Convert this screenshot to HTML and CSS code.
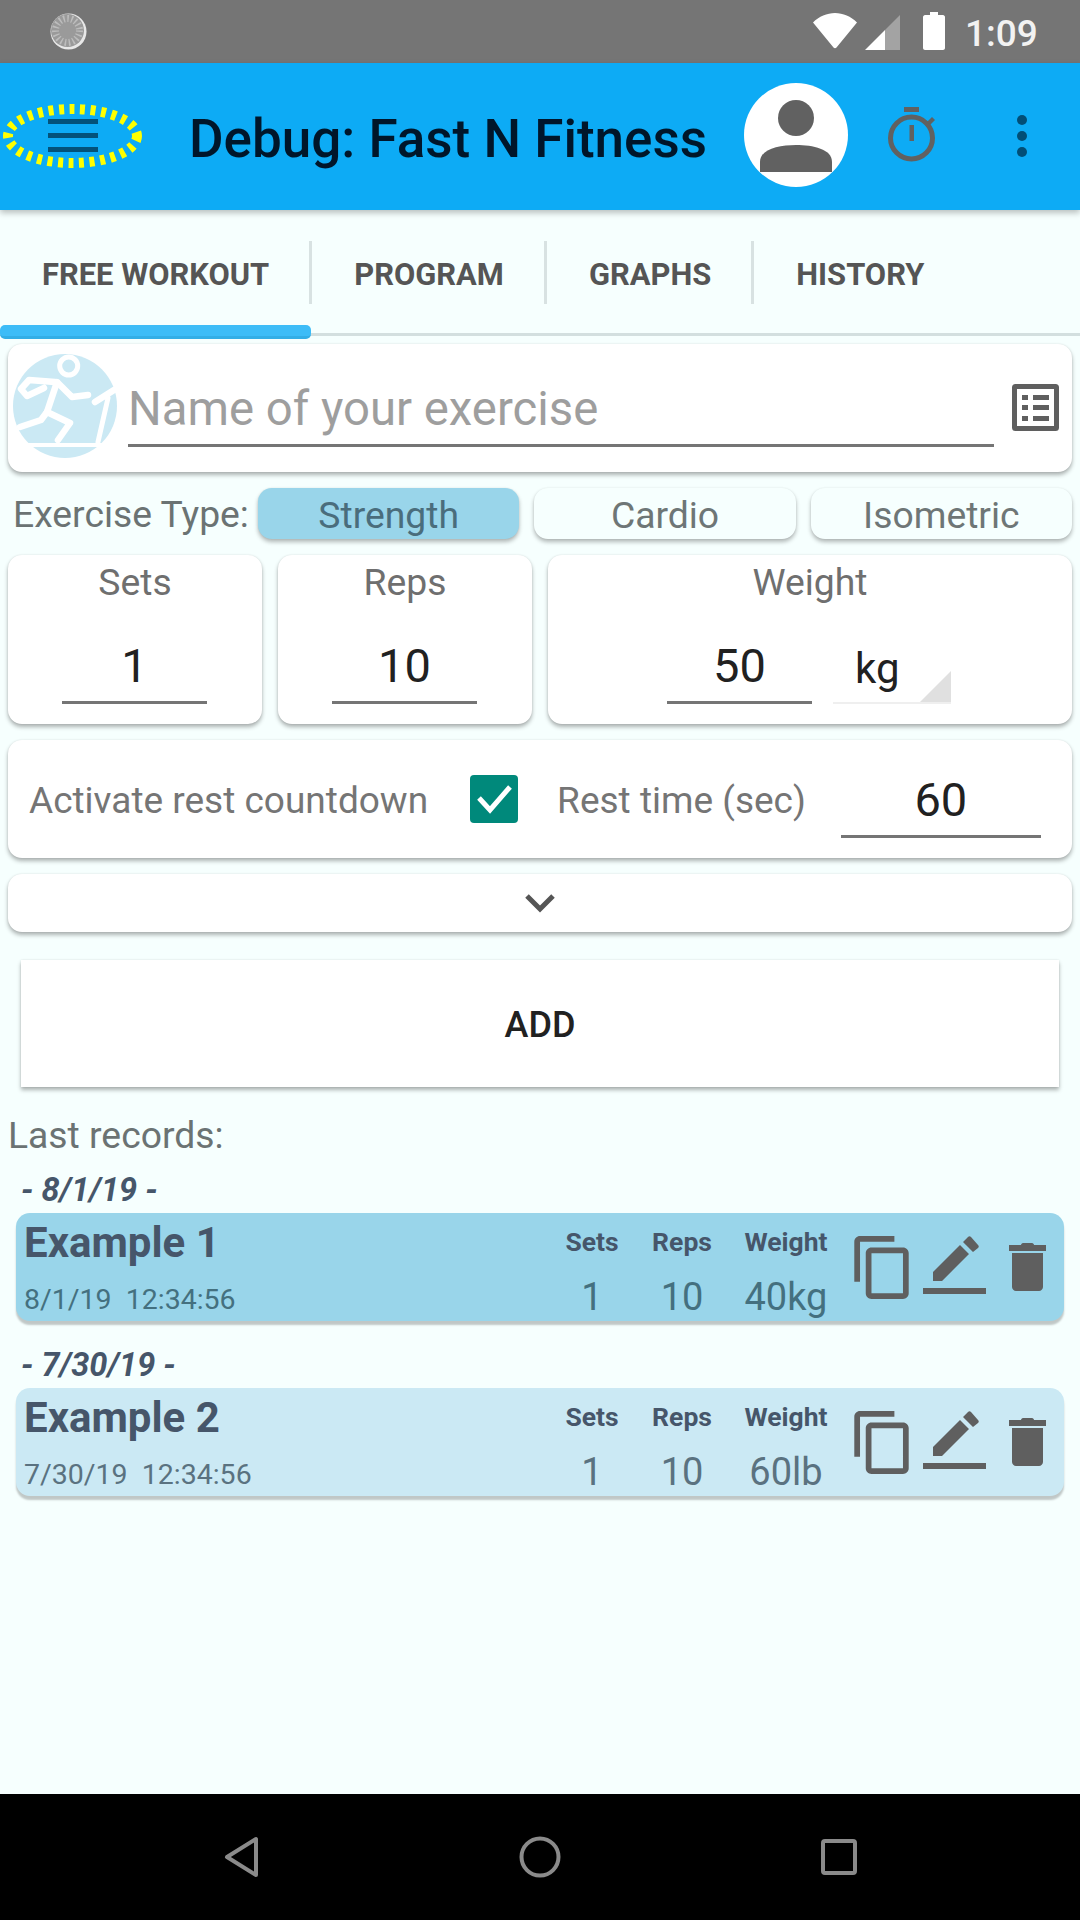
FILE: index.html
```html
<!DOCTYPE html>
<html lang="en">
<head>
<meta charset="utf-8">
<title>Fast N Fitness</title>
<link rel="stylesheet" href="styles.css">
</head>
<body>
<div class="screen">
  <header class="status">
    <svg class="dial" viewBox="0 0 37 37"><circle cx="18.5" cy="18.5" r="18" fill="#e8e8e8"/><circle cx="17.5" cy="17.5" r="16.5" fill="#9a9a9a"/><circle cx="17.5" cy="17.5" r="12" fill="none" stroke="#bdbdbd" stroke-width="7" stroke-dasharray="1.5 2.5"/></svg>
    <svg class="wifi" viewBox="0 0 44 36"><path d="M0 9.5C6 3.5 14 0 22 0s16 3.500 22 9.500L23.500 34.500c-.8 1-2.200 1-3 0z" fill="#fff"/></svg>
    <svg class="signal" viewBox="0 0 35 35"><path d="M0 35 20 15V35z" fill="#fff"/><path d="M20 15 35 0V35H20z" fill="#a3a3a3"/></svg>
    <svg class="battery" viewBox="0 0 22 38"><path d="M7 0h8v3h5c1 0 2 1 2 2v31c0 1-1 2-2 2H2c-1 0-2-1-2-2V5c0-1 1-2 2-2h5z" fill="#fff"/></svg>
    <span class="clock">1:09</span>
  </header>

  <header class="toolbar">
    <svg class="burger" viewBox="0 0 142 70"><ellipse cx="69.500" cy="33" rx="64.500" ry="27" fill="none" stroke="#ffff00" stroke-width="10" stroke-dasharray="5 5.540"/><rect x="45" y="16" width="50" height="5" fill="#03527a"/><rect x="45" y="30" width="50" height="5" fill="#03527a"/><rect x="45" y="44" width="50" height="5" fill="#03527a"/></svg>
    <h1 class="title">Debug: Fast N Fitness</h1>
    <svg class="avatar" viewBox="0 0 104 104"><circle cx="52" cy="52" r="52" fill="#fff"/><circle cx="52" cy="35" r="18" fill="#616161"/><path d="M16 89V79c0-13 19-17 36-17s36 4 36 17v10z" fill="#616161"/></svg>
    <svg class="timer" viewBox="0 0 47 55"><rect x="16" y="0" width="15" height="5" fill="#616161"/><circle cx="23.500" cy="31" r="21" fill="none" stroke="#616161" stroke-width="5"/><rect x="21.500" y="18" width="4.500" height="16" fill="#616161"/><path d="M39 15l5-5 3 3-5 5z" fill="#616161"/></svg>
    <svg class="dots" viewBox="0 0 10 42"><circle cx="5" cy="5" r="5" fill="#024e76"/><circle cx="5" cy="21" r="5" fill="#024e76"/><circle cx="5" cy="37" r="5" fill="#024e76"/></svg>
  </header>

  <nav class="tabs">
    <div class="tab tab-active">FREE WORKOUT</div>
    <div class="tab">PROGRAM</div>
    <div class="tab">GRAPHS</div>
    <div class="tab tab-last">HISTORY</div>
  </nav>

  <main class="content">
    <section class="card name-card">
      <svg class="runner" viewBox="0 0 104 104">
        <circle cx="52" cy="52" r="52" fill="#cbe9f4"/>
        <g fill="none" stroke="#fff" stroke-width="6.500" stroke-linecap="round" stroke-linejoin="round">
          <circle cx="55.700" cy="12" r="9" stroke-width="5"/>
          <path d="M42 28L16 26L8 35l6 7 17-8"/>
          <path d="M44 28L34 58"/>
          <path d="M45 29l14 14 16-2"/>
          <path d="M34 58l-6 8-21 7"/>
          <path d="M34 58l23 11-12 17"/>
          <path d="M82 48l19-12"/>
          <path d="M95 44l-10 44" stroke-width="5"/>
        </g>
        <rect x="4" y="89" width="96" height="4" fill="#fff"/>
      </svg>
      <div class="field name-field placeholder">Name of your exercise</div>
      <svg class="list-icon" viewBox="0 0 47 47"><rect x="2.500" y="2.500" width="42" height="42" rx="1" fill="none" stroke="#5f5f5f" stroke-width="5"/><g fill="#5f5f5f"><rect x="10" y="11" width="6" height="5"/><rect x="21" y="11" width="16" height="5"/><rect x="10" y="21" width="6" height="5"/><rect x="21" y="21" width="16" height="5"/><rect x="10" y="32" width="6" height="5"/><rect x="21" y="32" width="16" height="5"/></g></svg>
    </section>

    <section class="type-row">
      <span class="type-label">Exercise Type:</span>
      <div class="type-btn type-btn-on">Strength</div>
      <div class="type-btn">Cardio</div>
      <div class="type-btn">Isometric</div>
    </section>

    <section class="stats-row">
      <div class="card stat-card">
        <div class="stat-label">Sets</div>
        <div class="field stat-field">1</div>
      </div>
      <div class="card stat-card">
        <div class="stat-label">Reps</div>
        <div class="field stat-field">10</div>
      </div>
      <div class="card stat-card stat-card-wide">
        <div class="stat-label">Weight</div>
        <div class="weight-row">
          <div class="field stat-field">50</div>
          <div class="spinner">kg</div>
        </div>
      </div>
    </section>

    <section class="card rest-card">
      <span class="rest-label">Activate rest countdown</span>
      <svg class="checkbox" viewBox="0 0 48 48"><rect width="48" height="48" rx="4" fill="#00897b"/><path d="M9 23l11 12L40 12" fill="none" stroke="#fff" stroke-width="5"/></svg>
      <span class="rest-label rest-time">Rest time (sec)</span>
      <div class="field rest-field">60</div>
    </section>

    <section class="card collapse-card">
      <svg class="chevron" viewBox="0 0 32 20"><path d="M3 3l13 13L29 3" fill="none" stroke="#555" stroke-width="5"/></svg>
    </section>

    <div class="add-btn">ADD</div>

    <div class="records-title">Last records:</div>

    <section class="day">
      <div class="day-date">- 8/1/19 -</div>
      <article class="record record-first">
        <div class="record-main">
          <div class="record-name">Example 1</div>
          <div class="record-time">8/1/19&nbsp; 12:34:56</div>
        </div>
        <div class="record-stat stat-sets"><div class="record-head">Sets</div><div class="record-value">1</div></div>
        <div class="record-stat stat-reps"><div class="record-head">Reps</div><div class="record-value">10</div></div>
        <div class="record-stat stat-weight"><div class="record-head">Weight</div><div class="record-value">40kg</div></div>
        <svg class="ic-copy" viewBox="2 1 19 22"><path d="M16 1H4c-1.100 0-2 .9-2 2v14h2V3h12V1zm3 4H8c-1.100 0-2 .9-2 2v14c0 1.100.9 2 2 2h11c1.100 0 2-.9 2-2V7c0-1.100-.9-2-2-2zm0 16H8V7h11v14z" fill="#5f5f5f"/></svg>
        <svg class="ic-edit" viewBox="0 0 63 58"><path d="M10 36L37 9l9 9-27 27H10zM40 6l5-5c1-1 2-1 3 0l7 8c1 1 1 2 0 3l-5 4zM0 52h63v6H0z" fill="#5f5f5f"/></svg>
        <svg class="ic-trash" viewBox="0 0 37 48"><path d="M12 2c0-1 1-2 2-2h9c1 0 2 1 2 2h12v6H0V2zM3 10h31v34c0 2-2 4-4 4H7c-2 0-4-2-4-4z" fill="#5f5f5f"/></svg>
      </article>
    </section>

    <section class="day">
      <div class="day-date">- 7/30/19 -</div>
      <article class="record">
        <div class="record-main">
          <div class="record-name">Example 2</div>
          <div class="record-time">7/30/19&nbsp; 12:34:56</div>
        </div>
        <div class="record-stat stat-sets"><div class="record-head">Sets</div><div class="record-value">1</div></div>
        <div class="record-stat stat-reps"><div class="record-head">Reps</div><div class="record-value">10</div></div>
        <div class="record-stat stat-weight"><div class="record-head">Weight</div><div class="record-value">60lb</div></div>
        <svg class="ic-copy" viewBox="2 1 19 22"><path d="M16 1H4c-1.100 0-2 .9-2 2v14h2V3h12V1zm3 4H8c-1.100 0-2 .9-2 2v14c0 1.100.9 2 2 2h11c1.100 0 2-.9 2-2V7c0-1.100-.9-2-2-2zm0 16H8V7h11v14z" fill="#5f5f5f"/></svg>
        <svg class="ic-edit" viewBox="0 0 63 58"><path d="M10 36L37 9l9 9-27 27H10zM40 6l5-5c1-1 2-1 3 0l7 8c1 1 1 2 0 3l-5 4zM0 52h63v6H0z" fill="#5f5f5f"/></svg>
        <svg class="ic-trash" viewBox="0 0 37 48"><path d="M12 2c0-1 1-2 2-2h9c1 0 2 1 2 2h12v6H0V2zM3 10h31v34c0 2-2 4-4 4H7c-2 0-4-2-4-4z" fill="#5f5f5f"/></svg>
      </article>
    </section>
  </main>

  <footer class="navbar">
    <svg class="nav-back" viewBox="0 0 34 42"><path d="M32 3v36L3 21z" fill="none" stroke="#8a8a8a" stroke-width="4" stroke-linejoin="round"/></svg>
    <svg class="nav-home" viewBox="0 0 42 42"><circle cx="21" cy="21" r="18.500" fill="none" stroke="#8a8a8a" stroke-width="4"/></svg>
    <svg class="nav-recent" viewBox="0 0 36 36"><rect x="2" y="2" width="32" height="32" rx="2" fill="none" stroke="#8a8a8a" stroke-width="4"/></svg>
  </footer>
</div>
</body>
</html>
```

FILE: styles.css
```css
* { box-sizing: border-box; }
html, body { margin: 0; padding: 0; }
body { font-family: Roboto, "Liberation Sans", sans-serif; background: #f6fffe; }
svg { display: block; flex: none; }

.screen { width: 1080px; height: 1920px; display: flex; flex-direction: column; overflow: hidden; background: #f6fffe; }

/* status bar */
.status { height: 63px; flex: none; background: #757575; display: flex; align-items: flex-start; color: #fff; }
.dial { width: 37px; height: 37px; margin: 13px 0 0 50px; }
.wifi { width: 44px; height: 36px; margin: 13px 0 0 726px; }
.signal { width: 35px; height: 35px; margin: 15px 0 0 8px; }
.battery { width: 22px; height: 38px; margin: 12px 0 0 23px; }
.clock { font-size: 37px; font-weight: 500; line-height: 42px; margin: 13px 0 0 20px; color: #f2f2f2; }

/* toolbar */
.toolbar { height: 147px; flex: none; background: #0dabf5; display: flex; align-items: flex-start; position: relative; box-shadow: 0 3px 6px rgba(0,0,0,.25); }
.burger { width: 142px; height: 70px; margin: 40px 0 0 3px; }
.title { margin: 38px 0 0 44px; width: 555px; font-size: 53px; line-height: 76px; font-weight: 500; color: #00162a; white-space: nowrap; }
.avatar { width: 104px; height: 104px; margin-top: 20px; }
.timer { width: 47px; height: 55px; margin: 44px 0 0 40px; }
.dots { width: 10px; height: 42px; margin: 52px 0 0 82px; }

/* tabs */
.tabs { height: 126px; flex: none; display: flex; align-items: flex-start; padding-top: 31px; border-bottom: 3px solid #d3dfdf; position: relative; }
.tab { height: 63px; padding: 3px 40px 0 42px; border-right: 3px solid #d8e2e2; font-size: 30.9px; font-weight: 700; color: #555; display: flex; align-items: center; white-space: nowrap; }
.tab-last { border-right: 0; }
.tab-active::after { content: ""; position: absolute; left: 0; top: 115px; width: 311px; height: 11px; background: #3dbcf7; border-bottom: 3px solid #33aee6; border-radius: 5px; }

/* content */
.content { flex: 1; padding: 8px 8px 0; display: flex; flex-direction: column; }
.card { background: #fff; border-radius: 14px; box-shadow: 0 3px 4px rgba(0,0,0,.3), 0 0 2px rgba(0,0,0,.1); }

.name-card { height: 128px; display: flex; align-items: flex-start; }
.runner { width: 104px; height: 104px; margin: 10px 0 0 5px; }
.field { color: #212121; font-size: 47px; line-height: 54px; border-bottom: 3px solid #757575; text-align: center; }
.name-field { flex: 1; margin: 38px 0 0 11px; padding-bottom: 8px; text-align: left; font-size: 47.3px; color: #9e9e9e; }
.list-icon { width: 47px; height: 47px; margin: 40px 13px 0 18px; }

.type-row { display: flex; align-items: center; gap: 15px; margin-top: 16px; height: 51px; }
.type-label { width: 230px; flex: none; margin-left: 5px; font-size: 37.3px; color: #6b7373; white-space: nowrap; }
.type-btn { flex: 1; height: 51px; border-radius: 14px; background: #f6fffe; box-shadow: 0 3px 4px rgba(0,0,0,.28), 0 0 2px rgba(0,0,0,.08); font-size: 37.3px; line-height: 54px; text-align: center; color: #6e7676; }
.type-btn-on { background: #99d5ea; color: #4a6d7c; }

.stats-row { display: flex; gap: 16px; margin-top: 16px; height: 169px; }
.stat-card { width: 254px; padding-top: 6px; display: flex; flex-direction: column; align-items: center; }
.stat-card-wide { flex: 1; }
.stat-label { font-size: 37.3px; line-height: 42px; color: #6f6f6f; }
.stat-field { width: 145px; margin: 36px 1px 0 0; padding-bottom: 8px; }
.weight-row { display: flex; align-items: flex-start; align-self: flex-start; margin-left: 119px; }
.spinner { width: 118px; height: 65px; margin: 36px 0 0 20px; border-bottom: 2px solid #efefef; padding: 4px 0 0 22px; font-size: 42px; line-height: 52px; color: #212121; position: relative; }
.spinner::after { content: ""; position: absolute; right: 0; bottom: 0; border-style: solid; border-width: 0 0 31px 31px; border-color: transparent transparent #e0e0e0 transparent; }

.rest-card { height: 118px; margin-top: 16px; display: flex; align-items: center; padding-left: 21px; }
.rest-label { font-size: 37px; line-height: 42px; margin-top: 4px; color: #757575; white-space: nowrap; }
.checkbox { width: 48px; height: 48px; margin-left: 42px; }
.rest-time { margin-left: 39px; }
.rest-field { width: 200px; margin: 33px 0 0 35px; align-self: flex-start; padding-bottom: 8px; }

.collapse-card { height: 58px; margin-top: 16px; display: flex; align-items: center; justify-content: center; }
.chevron { width: 32px; height: 20px; }

.add-btn { height: 127px; margin: 28px 13px 0; background: #fff; box-shadow: 0 3px 4px rgba(0,0,0,.3), 0 0 2px rgba(0,0,0,.1); display: flex; align-items: center; justify-content: center; padding-top: 2px; font-size: 36px; font-weight: 500; color: #212121; }

.records-title { margin: 27px 0 15px 0; font-size: 37.3px; line-height: 42px; color: #6b7373; }

.day + .day { margin-top: 25px; }
.day-date { margin-left: 13px; height: 42px; padding-top: 1px; font-size: 32.5px; line-height: 36px; font-weight: 700; font-style: italic; color: #46566a; }

.record { height: 108px; margin: 0 8px; padding: 0 18px 0 8px; display: flex; align-items: flex-start; border-radius: 14px; background: #cbe9f4; box-shadow: 0 4px 2px rgba(0,0,0,.22); color: #5a7280; }
.record-first { background: #99d5ea; color: #44707f; }
.record-main { flex: 1; padding-top: 6px; }
.record-name { font-size: 42px; line-height: 48px; font-weight: 700; color: #46566a; }
.record-time { margin-top: 15px; font-size: 28.5px; line-height: 36px; }
.record-stat { padding-top: 13px; text-align: center; }
.stat-sets { width: 90px; }
.stat-reps { width: 90px; }
.stat-weight { width: 118px; margin-right: 9px; }
.record-head { font-size: 26.5px; line-height: 32px; font-weight: 700; color: #46566a; }
.record-value { margin-top: 18px; font-size: 38px; line-height: 42px; }
.ic-copy { width: 55px; height: 63px; margin-top: 23px; }
.ic-edit { width: 63px; height: 58px; margin: 23px 0 0 14px; }
.ic-trash { width: 37px; height: 48px; margin: 30px 0 0 23px; }

/* navigation bar */
.navbar { height: 126px; flex: none; background: #000; display: flex; align-items: flex-start; }
.nav-back { width: 34px; height: 42px; margin: 42px 0 0 224px; }
.nav-home { width: 42px; height: 42px; margin: 42px 0 0 261px; }
.nav-recent { width: 36px; height: 36px; margin: 45px 0 0 260px; }
```
